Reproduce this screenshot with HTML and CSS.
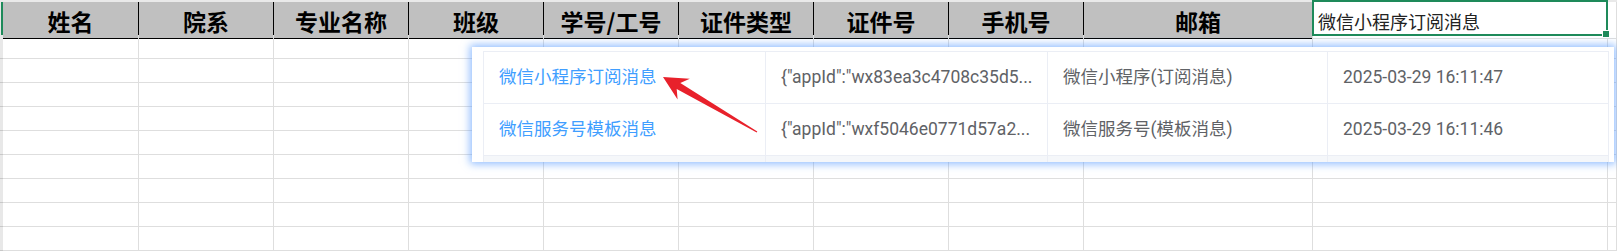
FILE: index.html
```html
<!DOCTYPE html>
<html lang="zh-CN">
  <head>
    <meta charset="UTF-8" />
    <title>消息模板选择</title>
    <link rel="stylesheet" href="styles.css">
  </head>
  <body>
    <div class="sheet">
      <div class="top-strip"></div>
      <div class="row head-row">
        <div class="rh"></div>
        <div class="th">姓名</div>
        <div class="th">院系</div>
        <div class="th">专业名称</div>
        <div class="th">班级</div>
        <div class="th">学号/工号</div>
        <div class="th">证件类型</div>
        <div class="th">证件号</div>
        <div class="th">手机号</div>
        <div class="th">邮箱</div>
        <div class="cell-text">微信小程序订阅消息</div>
        <div></div>
      </div>
      <div class="row"><div class="rh"></div><div></div><div></div><div></div><div></div><div></div><div></div><div></div><div></div><div></div><div></div><div></div></div>
      <div class="row"><div class="rh"></div><div></div><div></div><div></div><div></div><div></div><div></div><div></div><div></div><div></div><div></div><div></div></div>
      <div class="row"><div class="rh"></div><div></div><div></div><div></div><div></div><div></div><div></div><div></div><div></div><div></div><div></div><div></div></div>
      <div class="row"><div class="rh"></div><div></div><div></div><div></div><div></div><div></div><div></div><div></div><div></div><div></div><div></div><div></div></div>
      <div class="row"><div class="rh"></div><div></div><div></div><div></div><div></div><div></div><div></div><div></div><div></div><div></div><div></div><div></div></div>
      <div class="row"><div class="rh"></div><div></div><div></div><div></div><div></div><div></div><div></div><div></div><div></div><div></div><div></div><div></div></div>
      <div class="row"><div class="rh"></div><div></div><div></div><div></div><div></div><div></div><div></div><div></div><div></div><div></div><div></div><div></div></div>
      <div class="row"><div class="rh"></div><div></div><div></div><div></div><div></div><div></div><div></div><div></div><div></div><div></div><div></div><div></div></div>
      <div class="row"><div class="rh"></div><div></div><div></div><div></div><div></div><div></div><div></div><div></div><div></div><div></div><div></div><div></div></div>
    </div>

    <!-- selected cell -->
    <div class="selection"></div>

    <!-- dropdown with template options -->
    <div class="popup">
      <div class="opt-table">
        <div class="opt-row">
          <div class="opt-name">微信小程序订阅消息</div>
          <div>{"appId":"wx83ea3c4708c35d5...</div>
          <div>微信小程序(订阅消息)</div>
          <div>2025-03-29 16:11:47</div>
        </div>
        <div class="opt-row">
          <div class="opt-name">微信服务号模板消息</div>
          <div>{"appId":"wxf5046e0771d57a2...</div>
          <div>微信服务号(模板消息)</div>
          <div>2025-03-29 16:11:46</div>
        </div>
        <div class="opt-row more">
          <div></div>
          <div></div>
          <div></div>
          <div></div>
        </div>
      </div>
    </div>

    <svg class="annotation" width="1617" height="251" viewBox="0 0 1617 251">
      <polygon fill="#e8212b"
        points="663,77 689.8,78.8 680.3,83.1 757.3,131.6 756.7,132.4 676.7,89.1 677.6,99.4" />
    </svg>
  </body>
</html>
```

FILE: styles.css
```css
* {
  box-sizing: border-box;
  margin: 0;
  padding: 0;
}

body {
  position: relative;
  width: 1617px;
  height: 251px;
  overflow: hidden;
  background: #fff;
  font-family: "Noto Sans CJK SC", sans-serif;
}

/* spreadsheet */
.sheet {
  display: flex;
  flex-direction: column;
}

.top-strip {
  height: 2px;
  background: #e9e9e9;
}

.row {
  display: grid;
  grid-template-columns: 3px 136px repeat(7, 135px) 229px 295px 1fr;
  height: 24px;
}

.row > div {
  border-right: 1px solid #dedede;
  border-bottom: 1px solid #dedede;
}

.row .rh {
  background: #e8e8e8;
  border-right: none;
  border-bottom-color: #c8c8c8;
}

.head-row {
  height: 33px;
}

.head-row .rh {
  border-bottom: none;
  box-shadow: inset -2px 0 #1e8a5a;
}

.head-row .th {
  display: flex;
  align-items: center;
  justify-content: center;
  padding-top: 2px;
  background: #c0c0c0;
  border-right-color: #000;
  border-bottom-color: #000;
  color: #000;
  font-size: 23px;
  font-weight: 700;
}

.head-row .cell-text {
  display: flex;
  align-items: center;
  padding: 1px 0 0 5px;
  color: #222;
  font-size: 18px;
}

.selection {
  position: absolute;
  left: 1312px;
  top: 0;
  width: 296px;
  height: 36px;
  border: 2px solid #1e8a5a;
}

.selection::after {
  content: "";
  position: absolute;
  right: -4px;
  bottom: -4px;
  width: 6px;
  height: 6px;
  background: #1e8a5a;
  border: 1px solid #fff;
}

/* dropdown */
.popup {
  position: absolute;
  left: 472px;
  top: 47px;
  width: 1142px;
  height: 115px;
  padding: 4px 5px 0 11px;
  overflow: hidden;
  background: #fff;
  box-shadow: 0 0 8px 2px rgb(70 145 255 / 0.6);
  font-family: Roboto, "Noto Sans CJK SC", sans-serif;
  font-size: 17.5px;
  color: #606266;
}

.opt-table {
  border-left: 1px solid #ebeef5;
  border-top: 1px solid #ebeef5;
}

.opt-row {
  display: grid;
  grid-template-columns: 282px 282px 280px 1fr;
  height: 52px;
}

.opt-row > div {
  padding: 0 15px;
  line-height: 51px;
  border-right: 1px solid #ebeef5;
  border-bottom: 1px solid #ebeef5;
  white-space: nowrap;
  overflow: hidden;
}

.opt-row .opt-name {
  color: #409eff;
}

.opt-row.more {
  background: #f5f7fa;
}

.annotation {
  position: absolute;
  left: 0;
  top: 0;
  pointer-events: none;
}
```
